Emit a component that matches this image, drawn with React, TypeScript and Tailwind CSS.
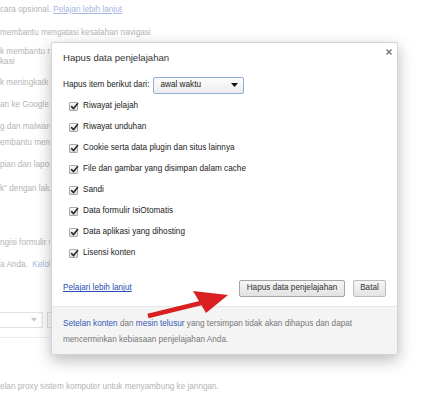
import React from "react";

const font = { fontFamily: '"Liberation Sans", Arial, sans-serif' };

function Check() {
  return (
    <span className="relative inline-flex h-[9px] w-[9px] items-center justify-center rounded-[1px] border border-[#a9a9a9] bg-gradient-to-b from-[#fbfbfb] to-[#dedede]">
      <svg width="9" height="9" viewBox="0 0 9 9" className="absolute left-[0px] top-[-1px]">
        <path d="M1.6 4.6 L3.6 6.6 L7.6 1.6" fill="none" stroke="#2b2b2b" strokeWidth="1.6" strokeLinecap="round" strokeLinejoin="round" />
      </svg>
    </span>
  );
}

const items = [
  "Riwayat jelajah",
  "Riwayat unduhan",
  "Cookie serta data plugin dan situs lainnya",
  "File dan gambar yang disimpan dalam cache",
  "Sandi",
  "Data formulir IsiOtomatis",
  "Data aplikasi yang dihosting",
  "Lisensi konten",
];

export default function App() {
  return (
    <div className="relative h-[396px] w-[445px] overflow-hidden bg-white" style={font}>
      {/* background settings page */}
      <div className="flex flex-col text-[8.2px] leading-[12px] text-[#b4b4b4]">
        <div className="mt-[4px] whitespace-nowrap">
          cara opsional. <span className="text-[#a7b6e2] underline">Pelajari lebih lanjut</span>
        </div>
        <div className="mt-[11px] whitespace-nowrap">membantu mengatasi kesalahan navigasi</div>
        <div className="flex w-[50px] flex-col overflow-hidden">
          <div className="mt-[8px] whitespace-nowrap leading-[10px]">
            <div>k membantu m</div>
            <div>kasi</div>
          </div>
          <div className="mt-[10px] whitespace-nowrap">k meningkatk</div>
          <div className="mt-[10px] whitespace-nowrap">an ke Google</div>
          <div className="mt-[10px] whitespace-nowrap">g dan malware</div>
          <div className="mt-[4px] whitespace-nowrap">embantu men</div>
          <div className="mt-[10px] whitespace-nowrap">pian dan lapor</div>
          <div className="mt-[12px] whitespace-nowrap">k" dengan lalu</div>
          <div className="mt-[42px] whitespace-nowrap">ngisi formulir w</div>
          <div className="mt-[10px] whitespace-nowrap">
            a Anda.&nbsp;&nbsp;<span className="text-[#a7b6e2]">Kelola</span>
          </div>
        </div>
        <div className="mt-[41px] flex h-[16px] gap-[4px]">
          <div className="flex h-[16px] w-[43px] items-center justify-end border border-l-0 border-[#e2e2e2] pr-[5px]">
            <svg width="6" height="4" viewBox="0 0 6 4">
              <path d="M0 0 H6 L3 3.5 Z" fill="#c6c6c6" />
            </svg>
          </div>
          <div className="h-[16px] w-[40px] border border-[#e2e2e2]" />
        </div>
        <div className="mt-[9px] h-px w-[50px] bg-[#eeeeee]" />
        <div className="mt-[43px] whitespace-nowrap">elan proxy sistem komputer untuk menyambung ke jaringan.</div>
      </div>

      {/* dialog */}
      <div className="absolute left-[51px] top-[42px] flex h-[313px] w-[347px] flex-col rounded-[2px] border border-[#d4d4d4] bg-white shadow-[0_5px_16px_rgba(0,0,0,0.28)]">
        <div className="relative flex h-[30px] items-center px-[11px] text-[9.6px] text-[#333]">
          Hapus data penjelajahan
          <svg width="8" height="8" viewBox="0 0 8 8" className="absolute right-[4px] top-[5px]">
            <path d="M1.5 1.5 L6.5 6.5 M6.5 1.5 L1.5 6.5" stroke="#7a7a7a" strokeWidth="1.5" />
          </svg>
        </div>
        <div className="mt-[4px] flex h-[16px] items-center px-[11px] text-[8.2px] text-[#222]">
          <span>Hapus item berikut dari:</span>
          <div className="ml-[4px] flex h-[17px] w-[91px] items-center justify-between rounded-[2px] border border-[#92add4] bg-gradient-to-b from-[#fdfdfd] to-[#ececec] pl-[6px] pr-[5px]">
            <span>awal waktu</span>
            <svg width="7" height="4" viewBox="0 0 7 4">
              <path d="M0 0 H7 L3.5 4 Z" fill="#111" />
            </svg>
          </div>
        </div>
        <div className="mt-[3px] flex flex-col pl-[17px] text-[8.2px] text-[#222]">
          {items.map((t) => (
            <div key={t} className="flex h-[21px] items-center gap-[5px]">
              <Check />
              <span>{t}</span>
            </div>
          ))}
        </div>
        <div className="mt-[16px] flex h-[17px] items-center px-[11px] text-[8.2px]">
          <span className="text-[#2a4cb3] underline">Pelajari lebih lanjut</span>
          <div className="ml-auto flex gap-[8px] text-[#333]">
            <button className="flex h-[17px] w-[106px] items-center justify-center rounded-[2px] border border-[#a6a6a6] bg-gradient-to-b from-[#f6f6f6] to-[#e2e2e2]">
              Hapus data penjelajahan
            </button>
            <button className="flex h-[17px] w-[33px] items-center justify-center rounded-[2px] border border-[#bcbcbc] bg-gradient-to-b from-[#f6f6f6] to-[#e4e4e4]">
              Batal
            </button>
          </div>
        </div>
        <div className="mt-[9px] flex-1 border-t border-[#e6e6e6] bg-[#f4f4f4] px-[11px] pt-[9px] text-[8.2px] leading-[16px] text-[#777]">
          <div className="whitespace-nowrap">
            <span className="text-[#3556b6]">Setelan konten</span> dan <span className="text-[#3556b6]">mesin telusur</span> yang tersimpan tidak akan dihapus dan dapat
          </div>
          <div className="whitespace-nowrap">mencerminkan kebiasaan penjelajahan Anda.</div>
        </div>
      </div>

      {/* red arrow annotation */}
      <svg className="pointer-events-none absolute left-0 top-0" width="445" height="396" viewBox="0 0 445 396">
        <path d="M148 316 L201 303" stroke="#d91f1f" strokeWidth="4.5" strokeLinecap="butt" />
        <path d="M193 291 L228 295 L206 313 Z" fill="#d91f1f" />
      </svg>
    </div>
  );
}
